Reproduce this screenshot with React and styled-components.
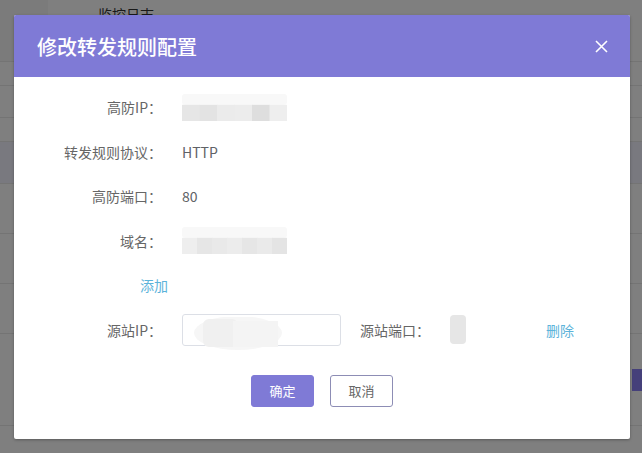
import React from 'react';
import styled, { createGlobalStyle } from 'styled-components';

const GlobalStyle = createGlobalStyle`
    html, body {
        margin: 0;
        padding: 0;
        background: #808080;
        font-family: "Noto Sans CJK SC", "Noto Sans", sans-serif;
    }
`

const Pagina = styled.div`
    position: relative;
    width: 642px;
    height: 453px;
    overflow: hidden;
    background: #ffffff;
`
const Topo = styled.div`
    height: 61px;
    display: flex;
    border-bottom: 1px solid #e8e8e8;
`
const TopoLateral = styled.div`
    width: 48px;
    background: #f6f6f6;
`
const TopoTexto = styled.div`
    padding: 4px 0 0 50px;
    font-size: 14px;
    color: #333;
`
const LinhaFundo = styled.div`
    height: ${p => p.altura}px;
    border-bottom: 1px solid #e8e8e8;
    background: ${p => p.destaque ? '#f3f3fe' : '#ffffff'};
    display: flex;
    justify-content: flex-end;
    align-items: center;
`
const BotaoFundo = styled.div`
    width: 10px;
    height: 22px;
    background: #8a80f4;
`
const Mascara = styled.div`
    position: absolute;
    inset: 0;
    background: rgba(0, 0, 0, 0.5);
`
const Modal = styled.div`
    position: absolute;
    top: 15px;
    left: 14px;
    width: 616px;
    background: #ffffff;
    border-radius: 2px;
    box-shadow: 0 1px 3px rgba(0, 0, 0, 0.3);
    overflow: hidden;
`
const Cabecalho = styled.div`
    height: 62px;
    background: #7f7ad6;
    display: flex;
    align-items: center;
    justify-content: space-between;
    padding: 0 22px 0 23px;
`
const Titulo = styled.h2`
    margin: 0;
    font-size: 20px;
    font-weight: 500;
    color: #ffffff;
`
const BtnFechar = styled.button`
    border: none;
    background: none;
    padding: 0;
    display: flex;
    cursor: pointer;
`
const Corpo = styled.div`
    padding: 14px 0 32px;
`
const Formulario = styled.div`
    display: flex;
    flex-direction: column;
    gap: 12.5px;
`
const Linha = styled.div`
    display: flex;
    align-items: center;
    height: 32px;
`
const Rotulo = styled.span`
    width: 148px;
    text-align: right;
    font-size: 14px;
    color: #666666;
    flex-shrink: 0;
`
const Valor = styled.span`
    margin-left: 20px;
    font-size: 14px;
    color: #606266;
    display: flex;
    align-items: center;
`
const Link = styled.a`
    font-size: 14px;
    color: #5cb3da;
    cursor: pointer;
    margin-left: ${p => p.recuo}px;
`
const Entrada = styled.div`
    margin-left: 20px;
    width: 159px;
    height: 32px;
    box-sizing: border-box;
    border: 1px solid #dcdfe6;
    border-radius: 3px;
    position: relative;
`
const RotuloInline = styled.span`
    margin-left: 19px;
    font-size: 14px;
    color: #666666;
`
const Botoes = styled.div`
    display: flex;
    justify-content: center;
    gap: 16px;
    margin-top: 29px;
`
const Botao = styled.button`
    width: 63px;
    height: 32px;
    border-radius: 3px;
    font-family: inherit;
    font-size: 13px;
    cursor: pointer;
    border: 1px solid ${p => p.primario ? '#7f7ad6' : '#8d8db5'};
    background: ${p => p.primario ? '#7f7ad6' : '#ffffff'};
    color: ${p => p.primario ? '#ffffff' : '#666666'};
`

const Mosaico = ({ largura, altura, cores, topo = '#f8f8f8' }) => {
    const w = largura / cores.length
    return (
        <svg width={largura} height={altura} style={{ display: 'block' }}>
            <rect x="0" y="0" width={largura} height={altura * 0.4} fill={topo} rx="3" />
            {cores.map((c, i) => (
                <rect key={i} x={i * w} y={altura * 0.4} width={w + 0.5} height={altura * 0.6} fill={c} />
            ))}
        </svg>
    )
}

export default class App extends React.Component {
    render() {
        return (
            <Pagina>
                <GlobalStyle />
                <Topo>
                    <TopoLateral />
                    <TopoTexto>监控日志</TopoTexto>
                </Topo>
                <LinhaFundo altura={23} />
                <LinhaFundo altura={31} />
                <LinhaFundo altura={23} />
                <LinhaFundo altura={41} destaque />
                <LinhaFundo altura={49} />
                <LinhaFundo altura={49} />
                <LinhaFundo altura={49} />
                <LinhaFundo altura={91}><BotaoFundo /></LinhaFundo>
                <Mascara />

                <Modal>
                    <Cabecalho>
                        <Titulo>修改转发规则配置</Titulo>
                        <BtnFechar>
                            <svg width="13" height="13" viewBox="0 0 13 13">
                                <path d="M1 1 L12 12 M12 1 L1 12" stroke="#ffffff" strokeWidth="1.6" />
                            </svg>
                        </BtnFechar>
                    </Cabecalho>
                    <Corpo>
                        <Formulario>
                            <Linha>
                                <Rotulo>高防IP：</Rotulo>
                                <Valor>
                                    <Mosaico largura={105} altura={27} cores={['#e6e6e6', '#e3e3e3', '#ebebeb', '#ececec', '#dedede', '#eeeeee']} />
                                </Valor>
                            </Linha>
                            <Linha>
                                <Rotulo>转发规则协议：</Rotulo>
                                <Valor>HTTP</Valor>
                            </Linha>
                            <Linha>
                                <Rotulo>高防端口：</Rotulo>
                                <Valor>80</Valor>
                            </Linha>
                            <Linha>
                                <Rotulo>域名：</Rotulo>
                                <Valor>
                                    <Mosaico largura={105} altura={27} cores={['#eeeeee', '#e6e6e6', '#e9e9e9', '#ececec', '#e6e6e6', '#eaeaea', '#e4e4e4']} />
                                </Valor>
                            </Linha>
                            <Linha>
                                <Link recuo={126}>添加</Link>
                            </Linha>
                            <Linha>
                                <Rotulo>源站IP：</Rotulo>
                                <Entrada>
                                    <svg width="100" height="36" style={{ position: 'absolute', left: 10, top: 2 }}>
                                        <ellipse cx="45" cy="16" rx="44" ry="17" fill="#f6f6f6" />
                                        <rect x="10" y="2" width="35" height="28" fill="#f0f0f0" rx="6" />
                                        <rect x="40" y="4" width="45" height="26" fill="#f4f4f4" />
                                    </svg>
                                </Entrada>
                                <RotuloInline>源站端口：</RotuloInline>
                                <Valor>
                                    <svg width="16" height="29" style={{ display: 'block' }}>
                                        <rect x="0" y="0" width="16" height="29" rx="4" fill="#e6e6e6" />
                                    </svg>
                                </Valor>
                                <Link recuo={80}>删除</Link>
                            </Linha>
                        </Formulario>
                        <Botoes>
                            <Botao primario>确定</Botao>
                            <Botao>取消</Botao>
                        </Botoes>
                    </Corpo>
                </Modal>
            </Pagina>
        )
    }
}
